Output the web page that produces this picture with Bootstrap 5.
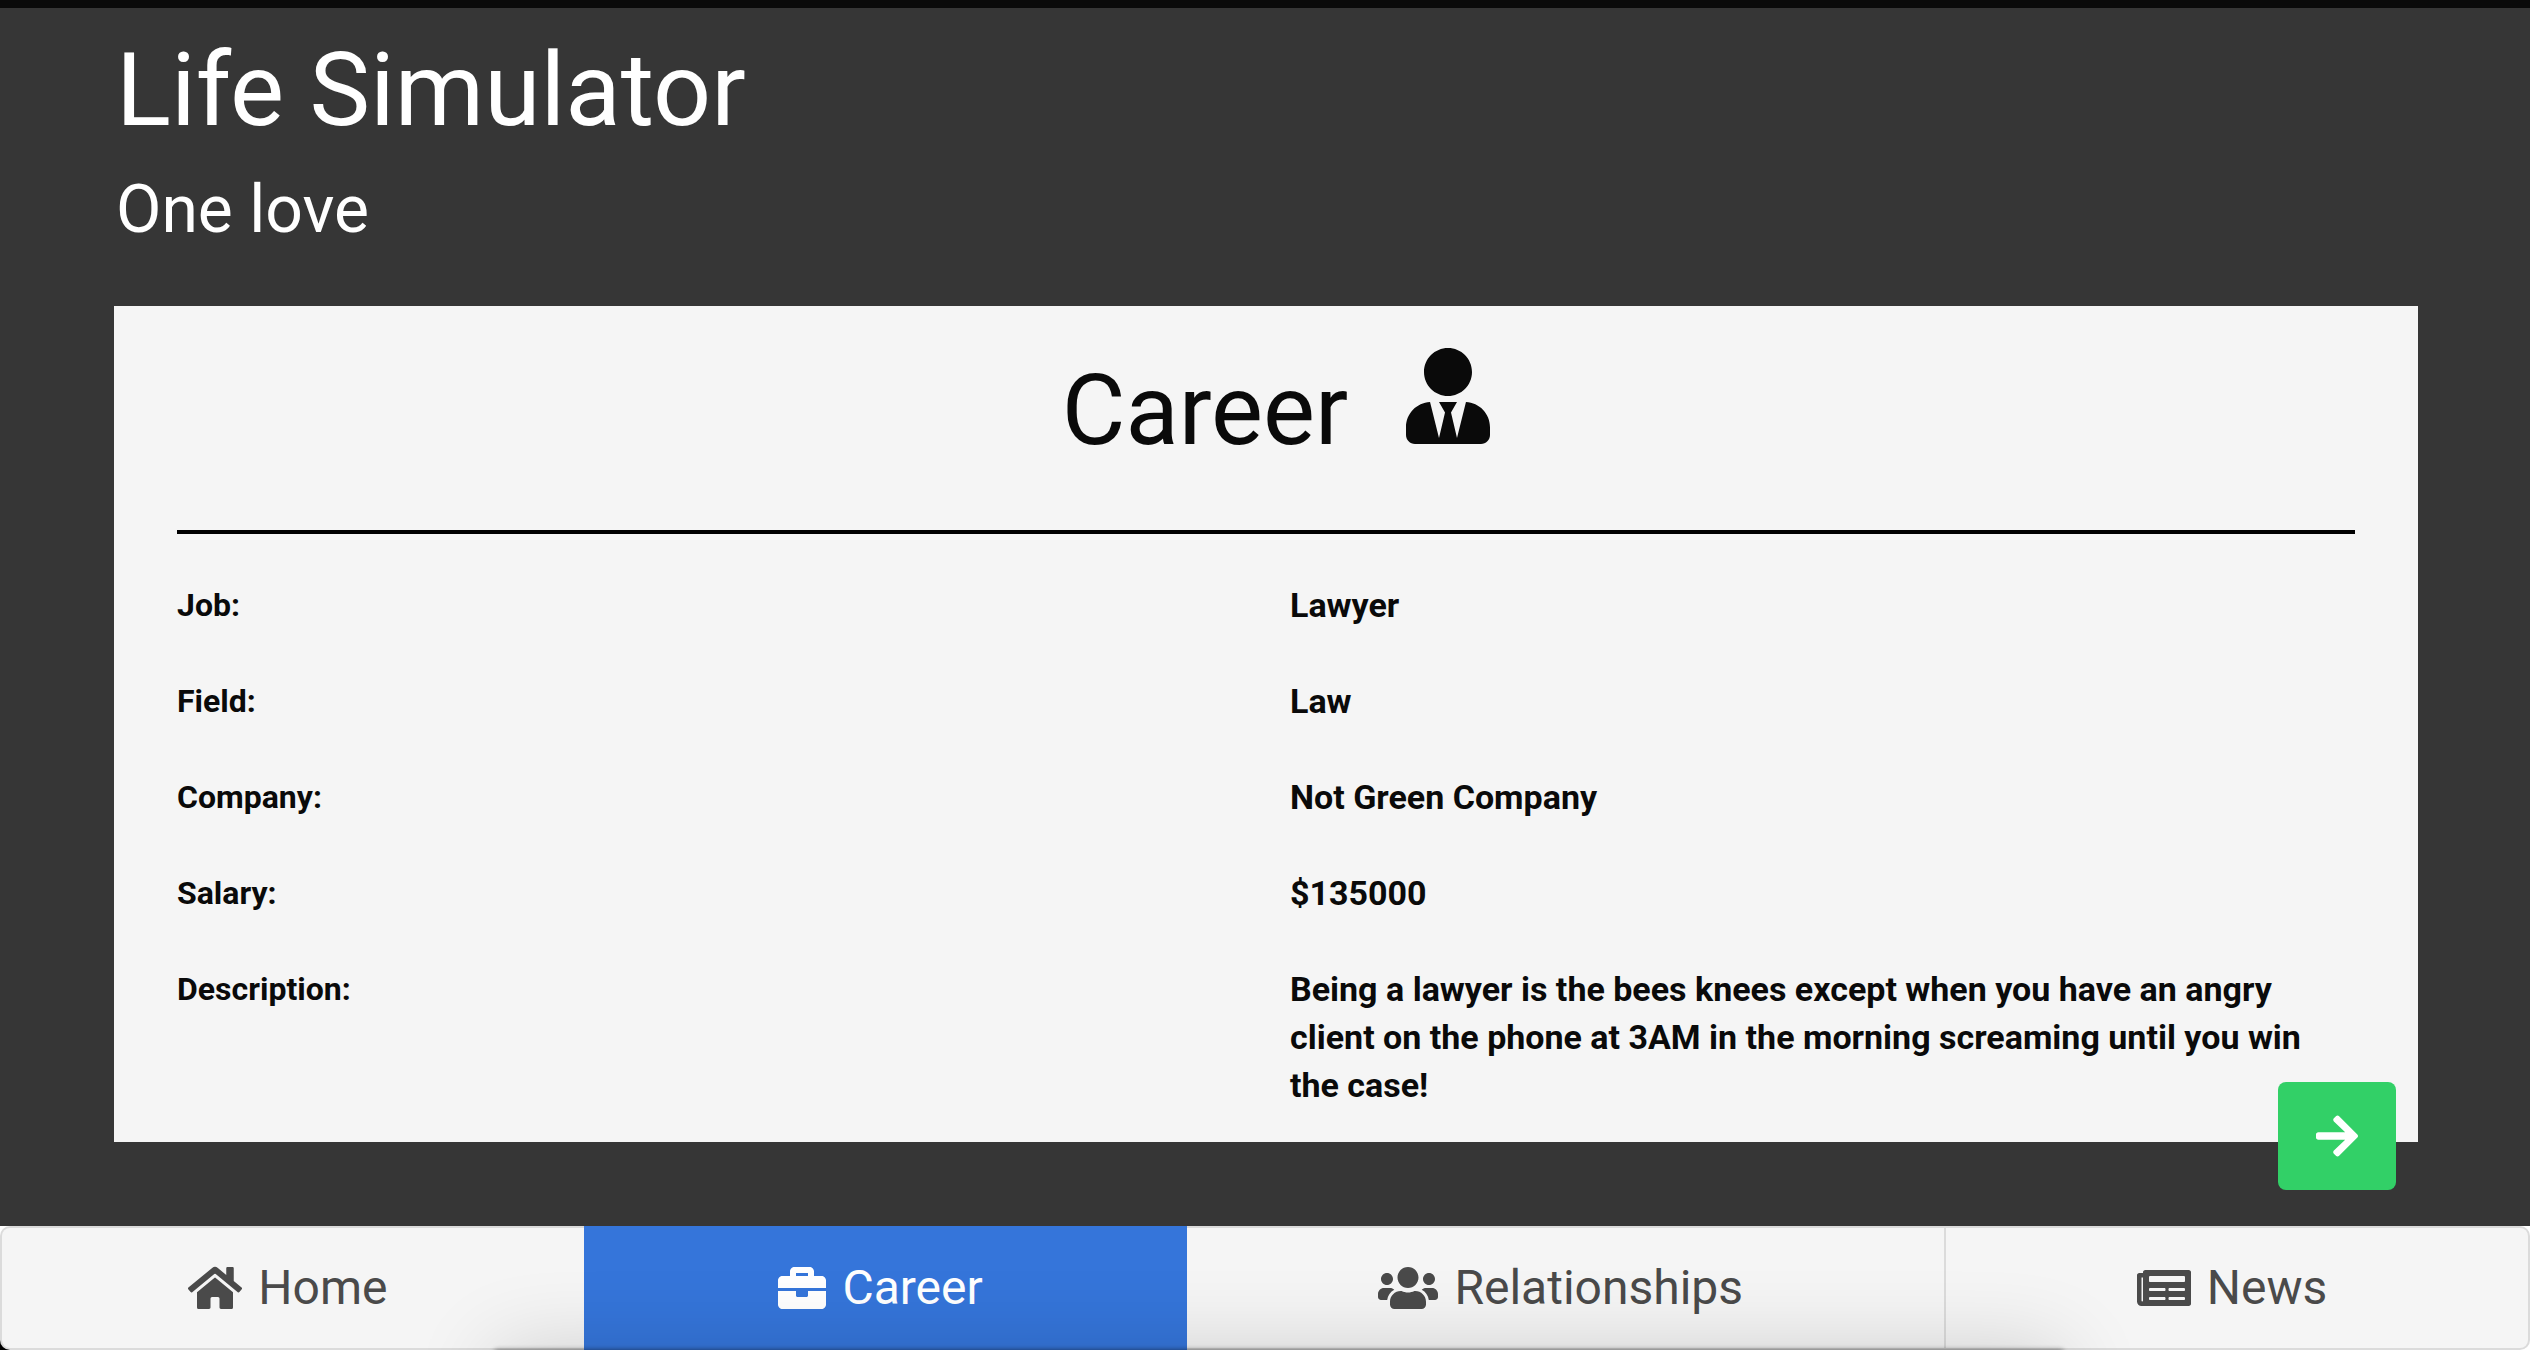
<!DOCTYPE html>
<html lang="en">
<head>
<meta charset="utf-8">
<meta name="viewport" content="width=device-width, initial-scale=1">
<title>Life Simulator</title>
<link href="https://cdn.jsdelivr.net/npm/bootstrap@5.3.0/dist/css/bootstrap.min.css" rel="stylesheet">
<style>
  body { background: #363636; color: #0a0a0a; font-family: Roboto, "Liberation Sans", sans-serif; font-size: 32px; line-height: 48px; border-top: 8px solid #0a0a0a; min-height: 100vh; }
  .page-wrap { padding: 24px 112px 200px 114px; }
  .page-wrap header { padding-left: 2px; }
  .app-title { font-size: 102px; line-height: 116px; }
  .app-tagline { font-size: 66px; line-height: 80px; margin-top: 22px; }
  .panel { background: #f5f5f5; margin-top: 56px; padding: 42px 63px 33px; }
  .panel-title { font-size: 98px; line-height: 116px; gap: 58px; padding-left: 20px; }
  .panel-title svg { height: 96px; margin-bottom: 25px; }
  .panel-rule { height: 4px; background: #000; opacity: 1; border: 0; margin: 61px 0 47px; }
  .facts { --bs-gutter-x: 48px; row-gap: 48px; font-weight: 700; }
  .facts dd { font-size: 34px; }
  .next-btn { right: 134px; bottom: 160px; width: 118px; height: 108px; border-radius: 8px; background: #32d067; color: #fff; z-index: 1040; }
  .next-btn svg { height: 48px; }
  .tab-base { background: linear-gradient(90deg, #000 12px, #fff 12px) bottom / 100% 12px no-repeat #fff; }
  .tab-strip { background: #dbdbdb; padding: 2px; border-radius: 10px; height: 124px; }
  .tab-strip a { background: #f5f5f5; color: #4a4a4a; font-size: 48px; line-height: 72px; gap: 16px; padding-right: 10px; text-decoration: none; border-right: 2px solid #dbdbdb; }
  .tab-strip svg { height: 48px; }
  .tab-strip a:first-child { border-radius: 8px 0 0 8px; border-right: 0; }
  .tab-strip a:last-child { border-radius: 0 8px 8px 0; border-right: 0; }
  .tab-strip a.active { background: #3575da; color: #fff; border: 0; margin: -2px 0; }
  .tab-home, .tab-news { flex: 582 1 0; }
  .tab-career { flex: 604 1 0; }
  .tab-relations { flex: 760 1 0; }
  .dock-shadow { left: 495px; right: 467px; bottom: -120px; height: 120px; box-shadow: 0 0 84px rgba(0,0,0,.16), 0 0 5px rgba(0,0,0,.55); z-index: 1050; pointer-events: none; }
</style>
<script src="https://cdn.jsdelivr.net/npm/bootstrap@5.3.0/dist/js/bootstrap.bundle.min.js"></script>
</head>
<body>
<main class="page-wrap">
  <header class="text-white">
    <h1 class="app-title fw-normal mb-0">Life Simulator</h1>
    <p class="app-tagline mb-0">One love</p>
  </header>
  <section class="panel">
    <h2 class="panel-title d-flex justify-content-center align-items-end fw-normal mb-0">Career
      <svg viewBox="0 0 448 512" fill="currentColor" aria-hidden="true"><path d="M224 256c70.700 0 128-57.300 128-128S294.700 0 224 0 96 57.300 96 128s57.300 128 128 128zm95.800 32.600L272 480l-32-136 32-56h-96l32 56-32 136-47.800-191.400C56.900 292 0 350.300 0 422.400V464c0 26.500 21.500 48 48 48h352c26.500 0 48-21.500 48-48v-41.600c0-72.100-56.900-130.400-128.200-133.800z"/></svg>
    </h2>
    <hr class="panel-rule">
    <dl class="row facts mb-0">
      <dt class="col-6">Job:</dt><dd class="col-6 mb-0">Lawyer</dd>
      <dt class="col-6">Field:</dt><dd class="col-6 mb-0">Law</dd>
      <dt class="col-6">Company:</dt><dd class="col-6 mb-0">Not Green Company</dd>
      <dt class="col-6">Salary:</dt><dd class="col-6 mb-0">$135000</dd>
      <dt class="col-6">Description:</dt><dd class="col-6 mb-0 pe-5">Being a lawyer is the bees knees except when you have an angry client on the phone at 3AM in the morning screaming until you win the case!</dd>
    </dl>
  </section>
</main>
<button type="button" class="next-btn btn position-fixed d-flex align-items-center justify-content-center p-0" aria-label="Next">
  <svg viewBox="0 0 448 512" fill="currentColor" aria-hidden="true"><path d="M190.500 66.900l22.200-22.200c9.400-9.400 24.600-9.400 33.900 0L441 239c9.400 9.400 9.400 24.600 0 33.900L246.600 467.300c-9.400 9.400-24.600 9.400-33.900 0l-22.200-22.200c-9.500-9.500-9.300-25 .4-34.300L311.400 296H24c-13.300 0-24-10.700-24-24v-32c0-13.300 10.700-24 24-24h287.400L190.900 101.200c-9.800-9.300-10-24.800-.4-34.300z"/></svg>
</button>
<nav class="tab-base fixed-bottom" aria-label="Sections">
  <div class="tab-strip d-flex">
    <a href="#home" class="tab-home d-flex align-items-center justify-content-center"><svg viewBox="0 0 576 512" fill="currentColor" aria-hidden="true"><path d="M280.400 148.300L96 300.100V464a16 16 0 0 0 16 16l112.100-.3a16 16 0 0 0 15.900-16V368a16 16 0 0 1 16-16h64a16 16 0 0 1 16 16v95.600a16 16 0 0 0 16 16.100L464 480a16 16 0 0 0 16-16V300L295.700 148.300a12.200 12.200 0 0 0-15.300 0zM571.600 251.500L488 182.600V44.100a12 12 0 0 0-12-12h-56a12 12 0 0 0-12 12v72.600L318.500 43a48 48 0 0 0-61 0L4.300 251.500a12 12 0 0 0-1.600 16.900l25.500 31A12 12 0 0 0 45.200 301l235.200-193.700a12.200 12.200 0 0 1 15.300 0L530.900 301a12 12 0 0 0 16.900-1.600l25.500-31a12 12 0 0 0-1.700-16.900z"/></svg>Home</a>
    <a href="#career" class="tab-career active d-flex align-items-center justify-content-center" aria-current="page"><svg viewBox="0 0 512 512" fill="currentColor" aria-hidden="true"><path d="M320 336c0 8.800-7.200 16-16 16h-96c-8.800 0-16-7.200-16-16v-48H0v144c0 25.600 22.400 48 48 48h416c25.600 0 48-22.400 48-48V288H320v48zm144-208h-80V80c0-25.600-22.400-48-48-48H176c-25.600 0-48 22.400-48 48v48H48c-25.600 0-48 22.400-48 48v80h512v-80c0-25.600-22.400-48-48-48zm-144 0H192V96h128v32z"/></svg>Career</a>
    <a href="#relationships" class="tab-relations d-flex align-items-center justify-content-center"><svg viewBox="0 0 640 512" fill="currentColor" aria-hidden="true"><path d="M96 224c35.300 0 64-28.700 64-64s-28.700-64-64-64-64 28.700-64 64 28.700 64 64 64zm448 0c35.300 0 64-28.700 64-64s-28.700-64-64-64-64 28.700-64 64 28.700 64 64 64zm32 32h-64c-17.600 0-33.500 7.100-45.100 18.600 40.300 22.100 68.900 62 75.100 109.400h66c17.700 0 32-14.300 32-32v-32c0-35.300-28.700-64-64-64zm-256 0c61.900 0 112-50.100 112-112S381.900 32 320 32 208 82.100 208 144s50.100 112 112 112zm76.800 32h-8.300c-20.800 10-43.900 16-68.500 16s-47.600-6-68.500-16h-8.300C179.600 288 128 339.600 128 403.200V432c0 26.500 21.500 48 48 48h288c26.500 0 48-21.500 48-48v-28.800c0-63.600-51.600-115.200-115.200-115.200zm-223.700-13.400C161.500 263.100 145.600 256 128 256H64c-35.300 0-64 28.700-64 64v32c0 17.700 14.300 32 32 32h65.900c6.300-47.400 34.900-87.300 75.200-109.400z"/></svg>Relationships</a>
    <a href="#news" class="tab-news d-flex align-items-center justify-content-center"><svg viewBox="0 0 576 512" fill="currentColor" aria-hidden="true"><path d="M552 64H88c-13.300 0-24 10.700-24 24v8H24c-13.300 0-24 10.700-24 24v280c0 26.500 21.500 48 48 48h504c13.300 0 24-10.700 24-24V88c0-13.300-10.700-24-24-24zM56 400a8 8 0 0 1-8-8V144h16v248a8 8 0 0 1-8 8zm236-16H140c-6.600 0-12-5.400-12-12v-8c0-6.600 5.400-12 12-12h152c6.600 0 12 5.400 12 12v8c0 6.600-5.400 12-12 12zm208 0H348c-6.600 0-12-5.400-12-12v-8c0-6.600 5.400-12 12-12h152c6.600 0 12 5.400 12 12v8c0 6.600-5.400 12-12 12zm-208-96H140c-6.600 0-12-5.400-12-12v-8c0-6.600 5.400-12 12-12h152c6.600 0 12 5.400 12 12v8c0 6.600-5.400 12-12 12zm208 0H348c-6.600 0-12-5.400-12-12v-8c0-6.600 5.400-12 12-12h152c6.600 0 12 5.400 12 12v8c0 6.600-5.400 12-12 12zm0-96H140c-6.600 0-12-5.400-12-12v-40c0-6.600 5.400-12 12-12h360c6.600 0 12 5.400 12 12v40c0 6.600-5.400 12-12 12z"/></svg>News</a>
  </div>
</nav>
<div class="dock-shadow position-fixed"></div>
</body>
</html>
